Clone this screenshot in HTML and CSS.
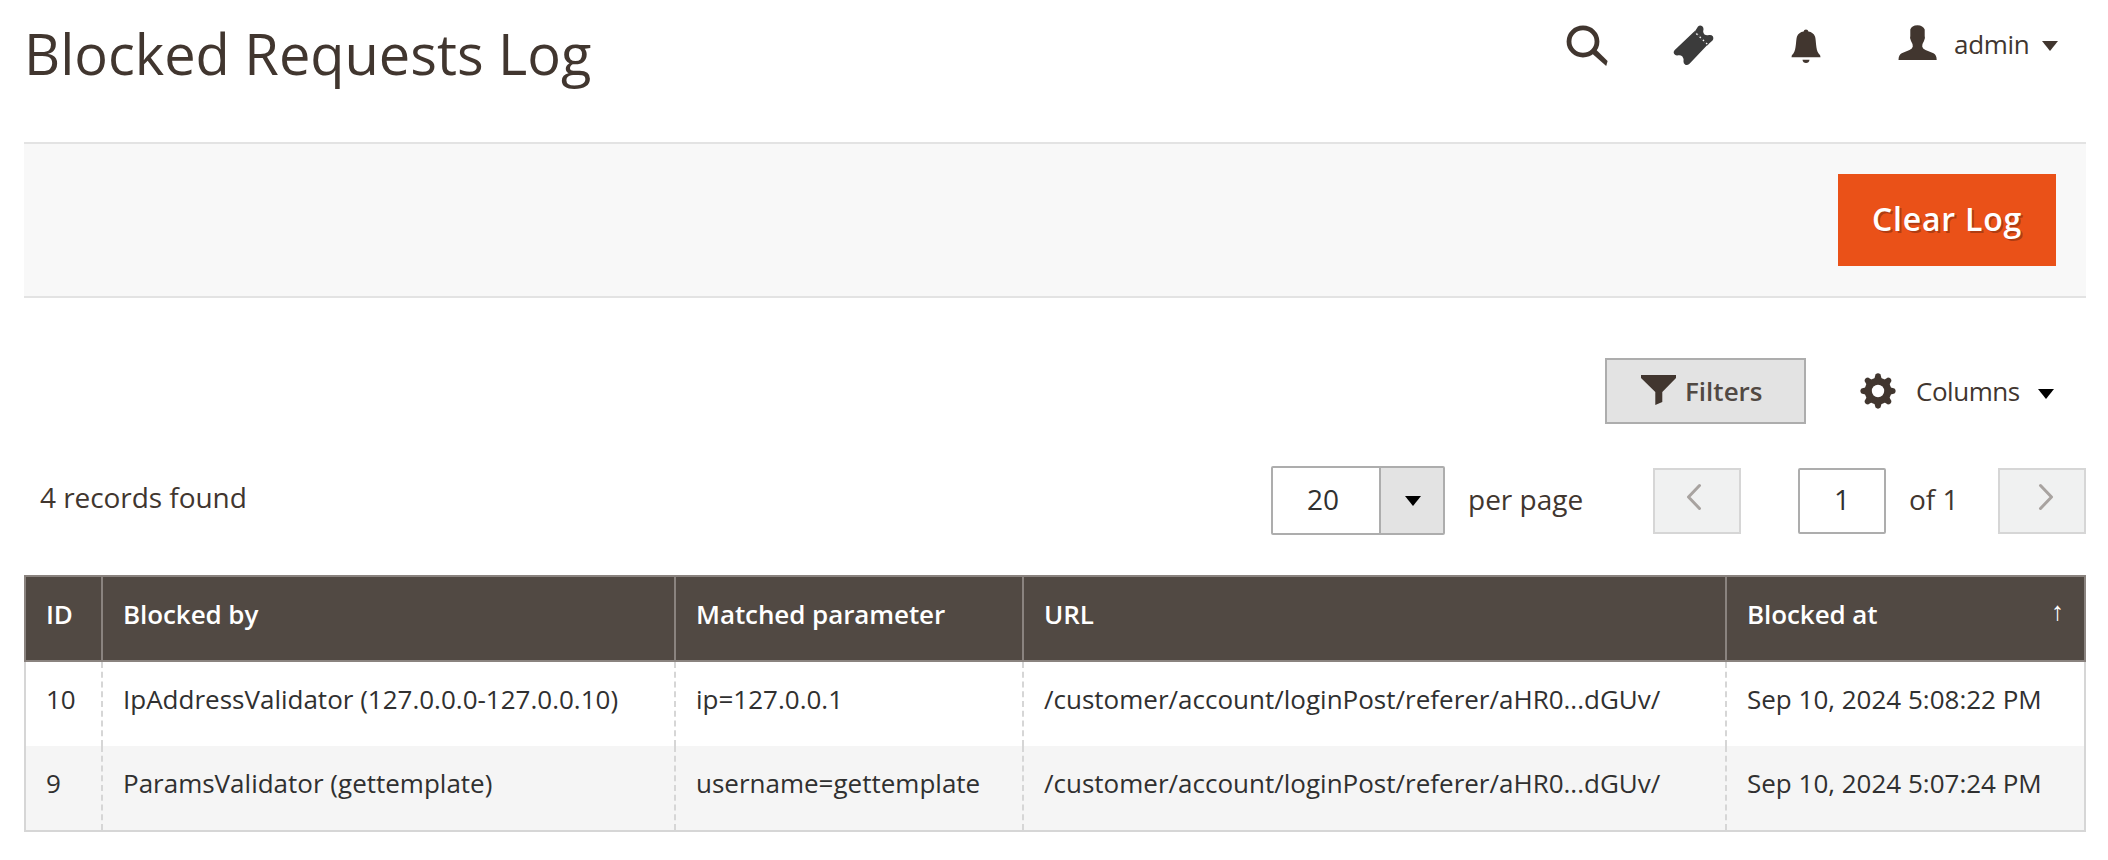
FILE: index.html
```html
<!DOCTYPE html>
<html lang="en">
<head>
<meta charset="utf-8">
<title>Blocked Requests Log</title>
<link rel="stylesheet" href="styles.css">
</head>
<body>
<header class="page-header">
  <h1 class="page-title">Blocked Requests Log</h1>
  <div class="header-tools">
    <svg class="icon-search" width="42" height="42" viewBox="0 0 42 42"><ellipse cx="17" cy="16.500" rx="14" ry="13.600" fill="none" stroke="#41362f" stroke-width="4.800"/><path d="M26 28.600 30.200 24.800 41.600 36 40.200 41Z" fill="#41362f"/></svg>
    <svg class="icon-ticket" width="42" height="42" viewBox="0 0 42 42"><path d="M22 6.300 25 1.500Q27 -.5 29.300 1.200Q31 3 30.300 5.500Q29.800 8 31.500 9.500Q33.300 10.800 36 10Q38.500 9.500 39.800 11.300Q41 13.500 39.500 15.500L35.300 19.300Z" fill="#3b3b3b"/><path d="M20.700 7 34.300 20 16.500 38.800Q14.500 40.500 12.300 39.800Q10.300 38.500 10.500 36.500Q11 33.500 9.400 31.500Q7.700 29.700 5 30.300Q2.500 31 1 28.800Q0 26.800 1.500 25.200Z" fill="#3b3b3b"/><path d="M21.300 6.500 35 19.700" stroke="#3b3b3b" stroke-width="2" stroke-dasharray="3 1.500"/></svg>
    <svg class="icon-bell" width="30" height="36" viewBox="0 0 30 36"><path d="M12.600 2.600Q13 .6 15 .6T17.400 2.600Q22.300 3.400 24 7.500C25.200 11 24.600 20.500 27.600 24.500Q29.700 26.300 29.500 28.200H.5Q.3 26.300 2.400 24.500C5.400 20.500 4.800 11 6 7.500Q7.700 3.400 12.600 2.600Z" fill="#41362f"/><path d="M11.500 30.800H18.500Q18 34 15 34T11.500 30.800Z" fill="#41362f"/></svg>
    <div class="account">
      <svg class="icon-user" width="40" height="36" viewBox="0 0 40 36"><path d="M12.300 4.500Q13.500 .5 19.500 .3Q25 .5 26.700 4.500V11Q27.500 12.500 26 16Q24 19 24.200 21.500Q24.500 23.500 27.500 25L35.500 28.300Q38.600 29.800 38.700 35H.5Q.6 29.800 3.700 28.300L11.500 25Q14.500 23.500 14.800 21.500Q15 19 13 16Q11.500 12.500 12.300 11Z" fill="#41362f"/></svg>
      <span>admin</span>
      <svg class="caret" width="16" height="10" viewBox="0 0 16 10"><path d="M0 0H16L8 10Z" fill="#41362f"/></svg>
    </div>
  </div>
</header>

<main class="content">
  <div class="page-actions"><button class="btn-primary">Clear Log</button></div>

  <div class="grid-tools">
    <button class="btn-filters"><svg width="36" height="32" viewBox="0 0 36 32"><path d="M0 1H35V4L21.300 18V28L14.300 31V18L0 4Z" fill="#41362f"/></svg><span>Filters</span></button>
    <div class="columns-menu">
      <svg width="36" height="36" viewBox="0 0 36 36"><g fill="#41362f"><path id="tooth" d="M14 7 15.500 1.500Q18-.8 20.500 1.500L22 7V29L20.500 34.500Q18 36.800 15.500 34.500L14 29Z"/><use href="#tooth" transform="rotate(45 18 18)"/><use href="#tooth" transform="rotate(90 18 18)"/><use href="#tooth" transform="rotate(135 18 18)"/><circle cx="18" cy="18" r="13.300"/></g><circle cx="18" cy="18" r="6.200" fill="#fff"/></svg>
      <span>Columns</span>
      <svg class="caret" width="16" height="10" viewBox="0 0 16 10"><path d="M0 0H16L8 10Z"/></svg>
    </div>
  </div>

  <div class="grid-pager">
    <div class="records">4 records found</div>
    <div class="page-size"><span class="size-value">20</span><span class="size-toggle"><svg width="16" height="10" viewBox="0 0 16 10"><path d="M0 0H16L8 10Z"/></svg></span></div>
    <span class="per-page">per page</span>
    <button class="page-nav"><svg width="16" height="28" viewBox="0 0 16 28"><path d="M13.500 2.500 2.500 14 13.500 25.500"/></svg></button>
    <div class="page-current">1</div>
    <span class="page-total">of 1</span>
    <button class="page-nav"><svg width="16" height="28" viewBox="0 0 16 28"><path d="M2.500 2.500 13.500 14 2.500 25.500"/></svg></button>
  </div>

  <div class="log">
    <div class="row head"><div>ID</div><div>Blocked by</div><div>Matched parameter</div><div>URL</div><div class="sorted"><span>Blocked at</span><span class="sort-arrow">↑</span></div></div>
    <div class="row"><div>10</div><div>IpAddressValidator (127.0.0.0-127.0.0.10)</div><div>ip=127.0.0.1</div><div>/customer/account/loginPost/referer/aHR0...dGUv/</div><div>Sep 10, 2024 5:08:22 PM</div></div>
    <div class="row odd"><div>9</div><div>ParamsValidator (gettemplate)</div><div>username=gettemplate</div><div>/customer/account/loginPost/referer/aHR0...dGUv/</div><div>Sep 10, 2024 5:07:24 PM</div></div>
  </div>
</main>
</body>
</html>
```

FILE: styles.css
```css
* { box-sizing: border-box; }
body {
  margin: 0;
  width: 2108px;
  height: 860px;
  padding: 0 22px 0 24px;
  background: #fff;
  color: #41362f;
  font: 26px/36px "Open Sans", sans-serif;
}
svg { display: block; flex: none; }
button { font: inherit; color: inherit; margin: 0; border-radius: 0; }

.page-header { display: flex; justify-content: space-between; height: 142px; }
.page-title { margin: 15px 0 0; font-size: 56px; line-height: 76px; font-weight: 400; letter-spacing: -0.02px; }
.header-tools { display: flex; align-items: flex-start; padding-right: 28px; }
.icon-search { margin: 25px 65px 0 0; }
.icon-ticket { margin: 25px 76px 0 0; }
.icon-bell { margin: 29px 77px 0 0; }
.account { display: flex; align-items: center; width: 160px; height: 36px; margin-top: 26px; }
.icon-user { margin: -2px 16px 0 0; }
.account span { letter-spacing: -0.3px; }
.account .caret { margin: 4px 0 0 auto; }

.page-actions {
  display: flex;
  justify-content: flex-end;
  align-items: center;
  height: 156px;
  padding-right: 30px;
  background: #f8f8f8;
  border: solid #e3e3e3;
  border-width: 2px 0;
}
.btn-primary {
  width: 218px;
  height: 92px;
  padding: 0 0 3px;
  border: 0;
  background: #ea5118;
  color: #fff;
  font-size: 32px;
  font-weight: 600;
  letter-spacing: 0.8px;
  text-shadow: 2px 2px 0 rgba(0, 0, 0, 0.25);
}

.grid-tools { display: flex; justify-content: flex-end; margin-top: 60px; height: 66px; padding-right: 32px; }
.btn-filters {
  display: flex;
  align-items: center;
  width: 201px;
  height: 66px;
  padding: 0 0 0 34px;
  border: 2px solid #adadad;
  background: #e3e3e3;
  color: #514943;
  font-weight: 600;
}
.btn-filters svg { margin: -2px 8px 0 0; }
.columns-menu { display: flex; align-items: center; width: 194px; margin-left: 54px; }
.columns-menu span { margin-left: 20px; letter-spacing: -0.45px; }
.columns-menu .caret { margin: 6px 0 0 auto; }

.grid-pager { display: flex; align-items: center; height: 70px; margin-top: 42px; font-size: 28px; }
.records { flex: 1; padding: 0 0 9px 16px; letter-spacing: -0.06px; }
.page-size {
  display: flex;
  width: 174px;
  height: 69px;
  margin-bottom: 2px;
  border: 2px solid #adadad;
  border-radius: 2px;
  color: #303030;
}
.size-value { width: 106px; padding-right: 6px; text-align: center; line-height: 63px; }
.size-toggle {
  display: flex;
  flex: 1;
  align-items: center;
  justify-content: center;
  padding: 2px 0 0 1px;
  background: #e3e3e3;
  border-left: 2px solid #adadad;
}
.per-page { width: 185px; margin-left: 23px; padding-bottom: 4px; }
.page-nav {
  display: flex;
  align-items: center;
  justify-content: center;
  width: 88px;
  height: 66px;
  padding: 0 6px 8px 0;
  border: 2px solid #d6d6d6;
  background: #f0f1f1;
}
.page-nav:last-child { padding: 0 0 8px 7px; }
.page-nav path { fill: none; stroke: #a8a3a0; stroke-width: 3; stroke-linecap: round; stroke-linejoin: round; }
.page-current {
  width: 88px;
  height: 66px;
  margin-left: 57px;
  border: 2px solid #adadad;
  border-radius: 2px;
  color: #303030;
  line-height: 58px;
  text-align: center;
}
.page-total { width: 89px; margin-left: 23px; padding-bottom: 4px; }

.log { margin-top: 39px; color: #303030; }
.row {
  display: grid;
  grid-template-columns: 77px 573px 348px 703px 1fr;
  height: 84px;
  border-right: 2px solid #d6d6d6;
}
.row > div { padding: 19px 20px 0 20px; border-left: 2px dashed #d6d6d6; white-space: nowrap; }
.row > div:first-child { border-left-style: solid; }
.head {
  height: 87px;
  border: solid #8a837f;
  border-width: 2px 2px 2px 0;
  background: #514943;
  color: #fff;
  font-weight: 600;
}
.row.head > div { border-left: 2px solid #8a837f; letter-spacing: -0.08px; }
.odd { height: 86px; background: #f5f5f5; border-bottom: 2px solid #d6d6d6; }
.sorted { display: flex; justify-content: space-between; }
.sort-arrow { font: 26px/31px "Liberation Sans", sans-serif; }
```
